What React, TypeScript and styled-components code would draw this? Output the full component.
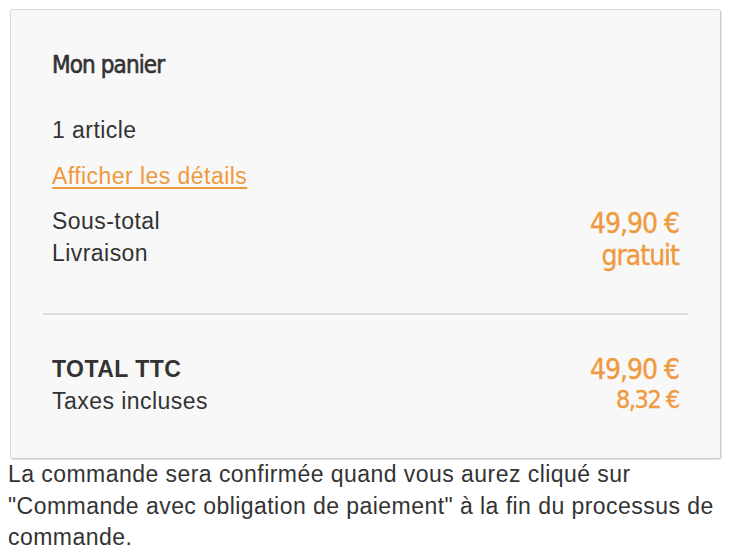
import React from "react";
import styled, { createGlobalStyle } from "styled-components";

const Global = createGlobalStyle`
  html, body { margin: 0; padding: 0; background: #fff; }
  body { font-family: "Liberation Sans", Arial, sans-serif; color: #333; }
`;

const NARROW = `"DejaVu Sans Condensed", "DejaVu Sans", sans-serif`;
const ORANGE = "#ef9a3d";

const Page = styled.div`
  padding: 9px 21px 0 8px;
`;

const Cart = styled.section`
  margin-left: 2px;
  width: 711px;
  box-sizing: border-box;
  height: 450px;
  background: #f8f8f8;
  border: 1px solid #dcdcdc;
  border-right-color: #d2d2d2;
  border-bottom-color: #cfcfcf;
  border-radius: 3px;
  box-shadow: 1px 1px 0 #e2e2e2;
  padding: 40px 32px 0;
`;

const Block = styled.div`
  padding: 0 9px;
`;

const Title = styled.h2`
  margin: 0;
  font-family: ${NARROW};
  font-weight: 400;
  font-size: 24px;
  letter-spacing: -0.9px;
  line-height: 30px;
  color: #333;
  -webkit-text-stroke: 0.6px #333;
`;

const Text = styled.div<{ $bold?: boolean }>`
  font-size: 23px;
  letter-spacing: 0.45px;
  line-height: 32px;
  font-weight: ${(p) => (p.$bold ? 700 : 400)};
  color: #333;
`;

const Count = styled(Text)`
  margin-top: 34px;
`;

const DetailsLink = styled.a`
  display: inline-block;
  margin-top: 14px;
  font-size: 23px;
  letter-spacing: 0.45px;
  line-height: 32px;
  color: ${ORANGE};
  text-decoration: underline;
  text-underline-offset: 3px;
  cursor: pointer;
`;

const Summary = styled.div<{ $top: number }>`
  display: flex;
  justify-content: space-between;
  align-items: flex-start;
  margin-top: ${(p) => p.$top}px;
`;

const Labels = styled.div`
  display: flex;
  flex-direction: column;
`;

const Values = styled.div<{ $shift: number }>`
  display: flex;
  flex-direction: column;
  align-items: flex-end;
  padding-top: ${(p) => p.$shift}px;
`;

const Price = styled.div<{ $size: number; $lh?: number }>`
  font-family: ${NARROW};
  font-size: ${(p) => p.$size}px;
  letter-spacing: ${(p) => (p.$size < 27 ? -1.4 : -1)}px;
  line-height: ${(p) => p.$lh ?? 32}px;
  color: ${ORANGE};
  -webkit-text-stroke: 0.35px ${ORANGE};
  white-space: nowrap;
`;

const Divider = styled.hr`
  margin: 41px 0 0;
  border: 0;
  height: 2px;
  background: #dedede;
`;

const Note = styled.p`
  margin: 0;
  font-size: 23px;
  letter-spacing: 0.45px;
  line-height: 31.5px;
  color: #333;
  width: 725px;
`;

export default function App() {
  return (
    <>
      <Global />
      <Page>
        <Cart>
          <Block>
            <Title>Mon panier</Title>
            <Count>1 article</Count>
            <DetailsLink>Afficher les détails</DetailsLink>
            <Summary $top={13}>
              <Labels>
                <Text>Sous-total</Text>
                <Text>Livraison</Text>
              </Labels>
              <Values $shift={3}>
                <Price $size={28}>49,90 €</Price>
                <Price $size={28}>gratuit</Price>
              </Values>
            </Summary>
          </Block>
          <Divider />
          <Block>
            <Summary $top={38}>
              <Labels>
                <Text $bold>TOTAL TTC</Text>
                <Text>Taxes incluses</Text>
              </Labels>
              <Values $shift={2}>
                <Price $size={28} $lh={30}>49,90 €</Price>
                <Price $size={25} $lh={30}>8,32 €</Price>
              </Values>
            </Summary>
          </Block>
        </Cart>
        <Note>
          La commande sera confirmée quand vous aurez cliqué sur "Commande avec obligation de paiement" à la fin du processus de commande.
        </Note>
      </Page>
    </>
  );
}
